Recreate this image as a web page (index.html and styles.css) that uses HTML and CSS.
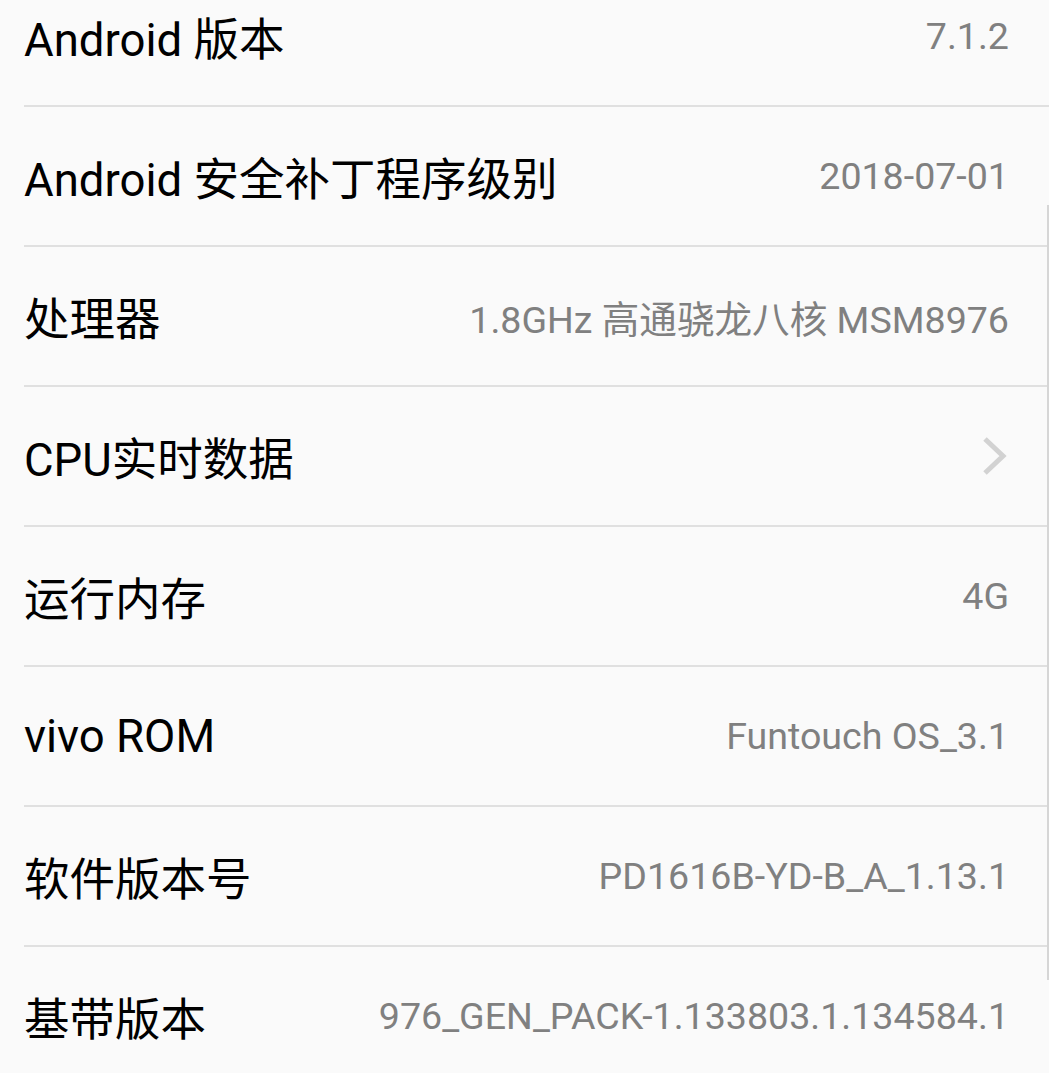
FILE: index.html
```html
<!DOCTYPE html>
<html lang="zh-CN">
<head>
    <meta charset="UTF-8">
    <meta name="viewport" content="width=device-width, initial-scale=1.0">
    <title>关于手机</title>
    <link rel="stylesheet" href="styles.css">
</head>
<body>
    <!-- Список параметров -->
    <div class="infoList">
        <div class="infoRow">
            <span class="infoTitle">Android 版本</span>
            <span class="infoValue">7.1.2</span>
        </div>
        <div class="infoRow">
            <span class="infoTitle">Android 安全补丁程序级别</span>
            <span class="infoValue">2018-07-01</span>
        </div>
        <div class="infoRow">
            <span class="infoTitle">处理器</span>
            <span class="infoValue">1.8GHz 高通骁龙八核 MSM8976</span>
        </div>
        <div class="infoRow">
            <span class="infoTitle">CPU实时数据</span>
            <svg class="chevron" width="26" height="40" viewBox="0 0 26 40">
                <path d="M3 3 L21 20 L3 37" fill="none" stroke="#d2d2d2" stroke-width="5"/>
            </svg>
        </div>
        <div class="infoRow">
            <span class="infoTitle">运行内存</span>
            <span class="infoValue">4G</span>
        </div>
        <div class="infoRow">
            <span class="infoTitle">vivo ROM</span>
            <span class="infoValue">Funtouch OS_3.1</span>
        </div>
        <div class="infoRow">
            <span class="infoTitle">软件版本号</span>
            <span class="infoValue">PD1616B-YD-B_A_1.13.1</span>
        </div>
        <div class="infoRow">
            <span class="infoTitle">基带版本</span>
            <span class="infoValue">976_GEN_PACK-1.133803.1.134584.1</span>
        </div>
    </div>

    <!-- Полоса прокрутки -->
    <div class="scrollThumb"></div>
</body>
</html>
```

FILE: styles.css
```css
/* Основной стиль */
body {
    font-family: Roboto, "Noto Sans CJK SC", sans-serif;
    background-color: #fafafa;
    margin: 0;
    padding: 0;
    height: 1073px;
    overflow: hidden;
}

.infoList {
    margin-top: -33px;
    padding-left: 24px;
}

.infoRow {
    display: flex;
    align-items: center;
    justify-content: space-between;
    height: 138px;
    padding-right: 40px;
    border-bottom: 2px solid #e0e0e0;
}

.infoTitle {
    font-size: 45.5px;
    color: #000;
}

.infoValue {
    font-size: 37.6px;
    color: #808080;
}

.chevron {
    margin-right: 1px;
}

/* Полоса прокрутки */
.scrollThumb {
    position: fixed;
    right: 0;
    top: 205px;
    width: 2px;
    height: 775px;
    background-color: #d6d6d6;
}
```
